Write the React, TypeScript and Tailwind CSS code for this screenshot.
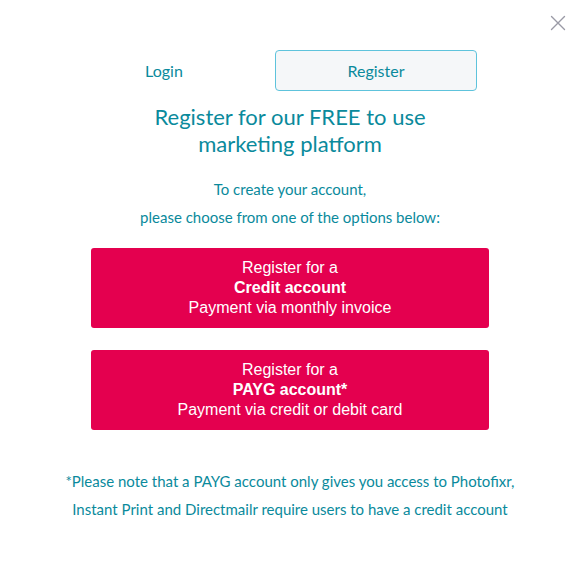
import React from "react";

const teal = "text-[#0a8a9c]";

function OptionButton({ title, lead, sub }: { title: string; lead: string; sub: string }) {
  return (
    <button className="w-[398px] h-[80px] rounded-[3px] bg-[#e4004f] text-white text-[16px] leading-[20px] font-['Liberation_Sans',Arial,sans-serif] flex flex-col items-center justify-center">
      <span>{lead}</span>
      <span className="font-bold">{title}</span>
      <span>{sub}</span>
    </button>
  );
}

export default function App() {
  return (
    <div className="relative w-[584px] h-[565px] bg-white font-['Lato','Noto_Sans',sans-serif]">
      {/* Close */}
      <button className="absolute right-[18px] top-[15px] text-[#9a9aa6]">
        <svg width="16" height="16" viewBox="0 0 16 16" fill="none">
          <path d="M1.5 1.5 L14.5 14.5 M14.5 1.5 L1.5 14.5" stroke="currentColor" strokeWidth="1.4" strokeLinecap="round" />
        </svg>
      </button>

      <div className="flex flex-col items-center pt-[50px] pr-[4px]">
        {/* Tabs */}
        <div className="flex w-[424px] ml-[-50px] items-center">
          <div className={`w-[222px] text-center text-[16px] ${teal}`}>Login</div>
          <div className={`w-[202px] h-[41px] flex items-center justify-center rounded-[4px] border border-[#5ec3dc] bg-[#f5f7f9] text-[16px] ${teal}`}>
            Register
          </div>
        </div>

        <h1 className={`mt-[12px] text-center text-[22px] leading-[27px] ${teal}`}>
          Register for our FREE to use
          <br />
          marketing platform
        </h1>

        <p className={`mt-[18px] text-center text-[15px] leading-[28px] ${teal}`}>
          To create your account,
          <br />
          please choose from one of the options below:
        </p>

        <div className="mt-[17px] flex flex-col gap-[22px]">
          <OptionButton lead="Register for a" title="Credit account" sub="Payment via monthly invoice" />
          <OptionButton lead="Register for a" title="PAYG account*" sub="Payment via credit or debit card" />
        </div>

        <p className={`mt-[37px] text-center text-[15px] leading-[28px] ${teal}`}>
          *Please note that a PAYG account only gives you access to Photofixr,
          <br />
          Instant Print and Directmailr require users to have a credit account
        </p>
      </div>
    </div>
  );
}
